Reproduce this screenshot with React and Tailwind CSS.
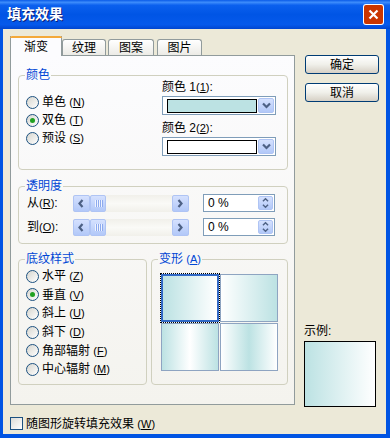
import React from "react";

const FONT = "font-['Liberation_Sans','Noto_Sans_CJK_SC',sans-serif]";
const CYAN = "#BCE2E3";

function Key({ k }) {
  return (
    <span className="text-[11px]">
      (<u>{k}</u>)
    </span>
  );
}

function Radio({ checked, children }) {
  return (
    <div className="flex items-center h-[18px]">
      <span className="w-[13px] h-[13px] shrink-0 rounded-full border border-[#1C5180] bg-linear-to-br from-[#D6D5CE] to-white flex items-center justify-center">
        {checked && <span className="w-[5px] h-[5px] rounded-full bg-[#21A121]" />}
      </span>
      <span className="ml-[3px] whitespace-nowrap">{children}</span>
    </div>
  );
}

function Group({ label, className = "", children }) {
  return (
    <fieldset className={`border border-[#D0D0BF] rounded-[4px] min-w-0 ${className}`}>
      <legend className="ml-[6px] px-[1px] leading-[12px] text-[#0046D5]">{label}</legend>
      {children}
    </fieldset>
  );
}

function BlueBtn({ className = "", children }) {
  return (
    <div
      className={`rounded-[2px] border border-[#AFC4F4] bg-linear-to-b from-[#D5E1FE] to-[#B2C8F8] flex items-center justify-center ${className}`}
    >
      {children}
    </div>
  );
}

function Chevron({ dir }) {
  const d = {
    left: "M6.5 2 L3.5 5.5 L6.5 9",
    right: "M3.5 2 L6.5 5.5 L3.5 9",
    down: "M2 3.5 L5.5 7 L9 3.5",
  }[dir];
  return (
    <svg width="11" height="11" viewBox="0 0 11 11">
      <path d={d} fill="none" stroke="#4D6185" strokeWidth="2.2" />
    </svg>
  );
}

function ScrollBar() {
  return (
    <div className="flex w-[116px] h-[17px] bg-linear-to-b from-[#F1F0EA] via-[#FAFAF7] to-[#F1F0EA]">
      <BlueBtn className="w-[17px] h-[17px]">
        <Chevron dir="left" />
      </BlueBtn>
      <BlueBtn className="w-[16px] h-[17px] gap-[1px]">
        {[0, 1, 2, 3].map((i) => (
          <span key={i} className="w-[1px] h-[7px] bg-[#EEF3FF] shadow-[1px_0_0_#8DAAEE]" />
        ))}
      </BlueBtn>
      <div className="flex-1" />
      <BlueBtn className="w-[17px] h-[17px]">
        <Chevron dir="right" />
      </BlueBtn>
    </div>
  );
}

function Spin() {
  return (
    <div className="w-[72px] h-[18px] border border-[#7F9DB9] bg-white flex items-center p-[1px]">
      <span className="ml-[3px] text-[12px]">0 %</span>
      <BlueBtn className="ml-auto w-[15px] h-full flex-col gap-0">
        <svg width="9" height="14" viewBox="0 0 9 14">
          <path d="M1.5 5 L4.5 2 L7.5 5" fill="none" stroke="#4D6185" strokeWidth="1.6" />
          <path d="M1.5 9 L4.5 12 L7.5 9" fill="none" stroke="#4D6185" strokeWidth="1.6" />
        </svg>
      </BlueBtn>
    </div>
  );
}

function Combo({ color }) {
  return (
    <div className="w-[114px] h-[19px] border border-[#7F9DB9] bg-white flex items-center p-[1px]">
      <span className="ml-[3px] w-[90px] h-[14px] border border-black" style={{ background: color }} />
      <BlueBtn className="ml-auto w-[16px] h-full">
        <Chevron dir="down" />
      </BlueBtn>
    </div>
  );
}

function Tab({ active, className = "", children }) {
  return active ? (
    <div
      className={`relative z-10 -mb-[1px] h-[20px] border-x border-[#919B9C] bg-[#FCFCFE] flex flex-col ${className}`}
    >
      <div className="h-[3px] -mx-[1px] rounded-t-[3px] bg-[#F4A93A]" />
      <div className="flex-1 flex items-center justify-center">{children}</div>
    </div>
  ) : (
    <div
      className={`h-[16px] border border-b-0 border-[#919B9C] rounded-t-[3px] bg-linear-to-b from-white to-[#ECEBE6] flex items-center justify-center ${className}`}
    >
      {children}
    </div>
  );
}

function XpButton({ children }) {
  return (
    <div className="w-[74px] h-[19px] rounded-[3px] border border-[#003C74] bg-linear-to-b from-white via-[#F0F0EA] to-[#D6D0C5] flex items-center justify-center">
      {children}
    </div>
  );
}

const variants = [
  `linear-gradient(to right, ${CYAN}, #FFFFFF)`,
  `linear-gradient(to right, #FFFFFF, ${CYAN})`,
  `linear-gradient(to right, ${CYAN}, #FFFFFF 50%, ${CYAN})`,
  `linear-gradient(to right, #FFFFFF, ${CYAN} 50%, #FFFFFF)`,
];

export default function App() {
  return (
    <div className={`w-[390px] h-[438px] flex flex-col bg-[#0054E3] text-[12px] text-black ${FONT}`}>
      {/* Title bar */}
      <div className="h-[29px] shrink-0 flex items-center pl-[7px] pr-[6px] bg-[linear-gradient(to_bottom,#0A5BE8_0%,#3D8CFB_8%,#0B60EE_18%,#0055E5_50%,#0559EB_85%,#0045CF_100%)]">
        <span className="text-white font-bold text-[14px] [text-shadow:1px_1px_#0A1E78]">填充效果</span>
        <div className="ml-auto w-[21px] h-[21px] rounded-[3px] bg-white p-[1px] flex">
          <div className="flex-1 rounded-[2px] bg-orange-700 flex items-center justify-center">
            <svg width="11" height="11" viewBox="0 0 11 11">
              <path d="M1.5 1.5 L9.5 9.5 M9.5 1.5 L1.5 9.5" stroke="#FFFFFF" strokeWidth="2.2" />
            </svg>
          </div>
        </div>
      </div>

      {/* Client */}
      <div className="flex-1 ml-[3px] mr-[4px] mb-[4px] bg-[#ECE9D8] pl-[7px] pt-[7px] flex flex-col">
        <div className="flex">
          {/* Tab control */}
          <div className="w-[285px] flex flex-col">
            <div className="flex items-end h-[19px]">
              <Tab active className="w-[52px]">渐变</Tab>
              <Tab className="w-[44px]">纹理</Tab>
              <Tab className="ml-[2px] w-[46px]">图案</Tab>
              <Tab className="ml-[3px] w-[45px]">图片</Tab>
            </div>
            <div className="h-[350px] border border-[#919B9C] bg-linear-to-b from-[#FCFCFE] to-[#F4F3EE] pt-[13px] pl-[7px] pr-[6px]">
              <Group label="颜色">
                <div className="flex pl-[7px] pr-[10px] pb-[13px]">
                  <div className="w-[136px] pt-[12px]">
                    <Radio>单色 <Key k="N" /></Radio>
                    <Radio checked>双色 <Key k="T" /></Radio>
                    <Radio>预设 <Key k="S" /></Radio>
                  </div>
                  <div className="flex flex-col">
                    <div className="leading-[12px]">颜色 1<Key k="1" />:</div>
                    <div className="mt-[3px]">
                      <Combo color={CYAN} />
                    </div>
                    <div className="leading-[12px] mt-[7px]">颜色 2<Key k="2" />:</div>
                    <div className="mt-[3px]">
                      <Combo color="#FFFFFF" />
                    </div>
                  </div>
                </div>
              </Group>

              <Group label="透明度" className="mt-[10px]">
                <div className="pl-[8px] pt-[2px] pb-[7px] flex flex-col gap-[6px]">
                  {[["从", "R"], ["到", "O"]].map(([t, k]) => (
                    <div key={k} className="flex items-center h-[18px]">
                      <span className="w-[46px]">
                        {t}<Key k={k} />:
                      </span>
                      <ScrollBar />
                      <span className="ml-[14px]">
                        <Spin />
                      </span>
                    </div>
                  ))}
                </div>
              </Group>

              <div className="flex gap-[4px] mt-[9px]">
                <Group label="底纹样式" className="w-[129px]">
                  <div className="pl-[7px] pt-[2px] flex flex-col [&>div]:h-[18.6px]">
                    <Radio>水平 <Key k="Z" /></Radio>
                    <Radio checked>垂直 <Key k="V" /></Radio>
                    <Radio>斜上 <Key k="U" /></Radio>
                    <Radio>斜下 <Key k="D" /></Radio>
                    <Radio>角部辐射 <Key k="F" /></Radio>
                    <Radio>中心辐射 <Key k="M" /></Radio>
                  </div>
                </Group>
                <Group label={<>变形 <Key k="A" /></>} className="flex-1">
                  <div className="pl-[9px] pt-[9px] pb-[13px]">
                    <div className="grid grid-cols-[58px_58px] grid-rows-[48px_48px] gap-[1px] w-fit">
                      {variants.map((bg, i) => (
                        <div
                          key={i}
                          className={
                            i === 0
                              ? "border-2 border-[#3169C6] outline outline-1 outline-dotted outline-black"
                              : "border border-[#8EA4C1]"
                          }
                          style={{ background: bg }}
                        />
                      ))}
                    </div>
                  </div>
                </Group>
              </div>
            </div>
          </div>

          {/* Buttons column */}
          <div className="ml-[10px] flex flex-col">
            <div className="mt-[19px]">
              <XpButton>确定</XpButton>
            </div>
            <div className="mt-[9px]">
              <XpButton>取消</XpButton>
            </div>
            <div className="mt-[223px] leading-[12px] -ml-[1px]">示例:</div>
            <div
              className="mt-[4px] -ml-[1px] w-[72px] h-[66px] border border-black"
              style={{ background: `linear-gradient(to right, ${CYAN}, #FFFFFF)` }}
            />
          </div>
        </div>

        {/* Bottom checkbox */}
        <div className="mt-[10px] flex items-center h-[13px]">
          <span className="w-[13px] h-[13px] border border-[#1C5180] bg-linear-to-br from-[#DCDCD7] to-white" />
          <span className="ml-[3px]">
            随图形旋转填充效果 <Key k="W" />
          </span>
        </div>
      </div>
    </div>
  );
}
